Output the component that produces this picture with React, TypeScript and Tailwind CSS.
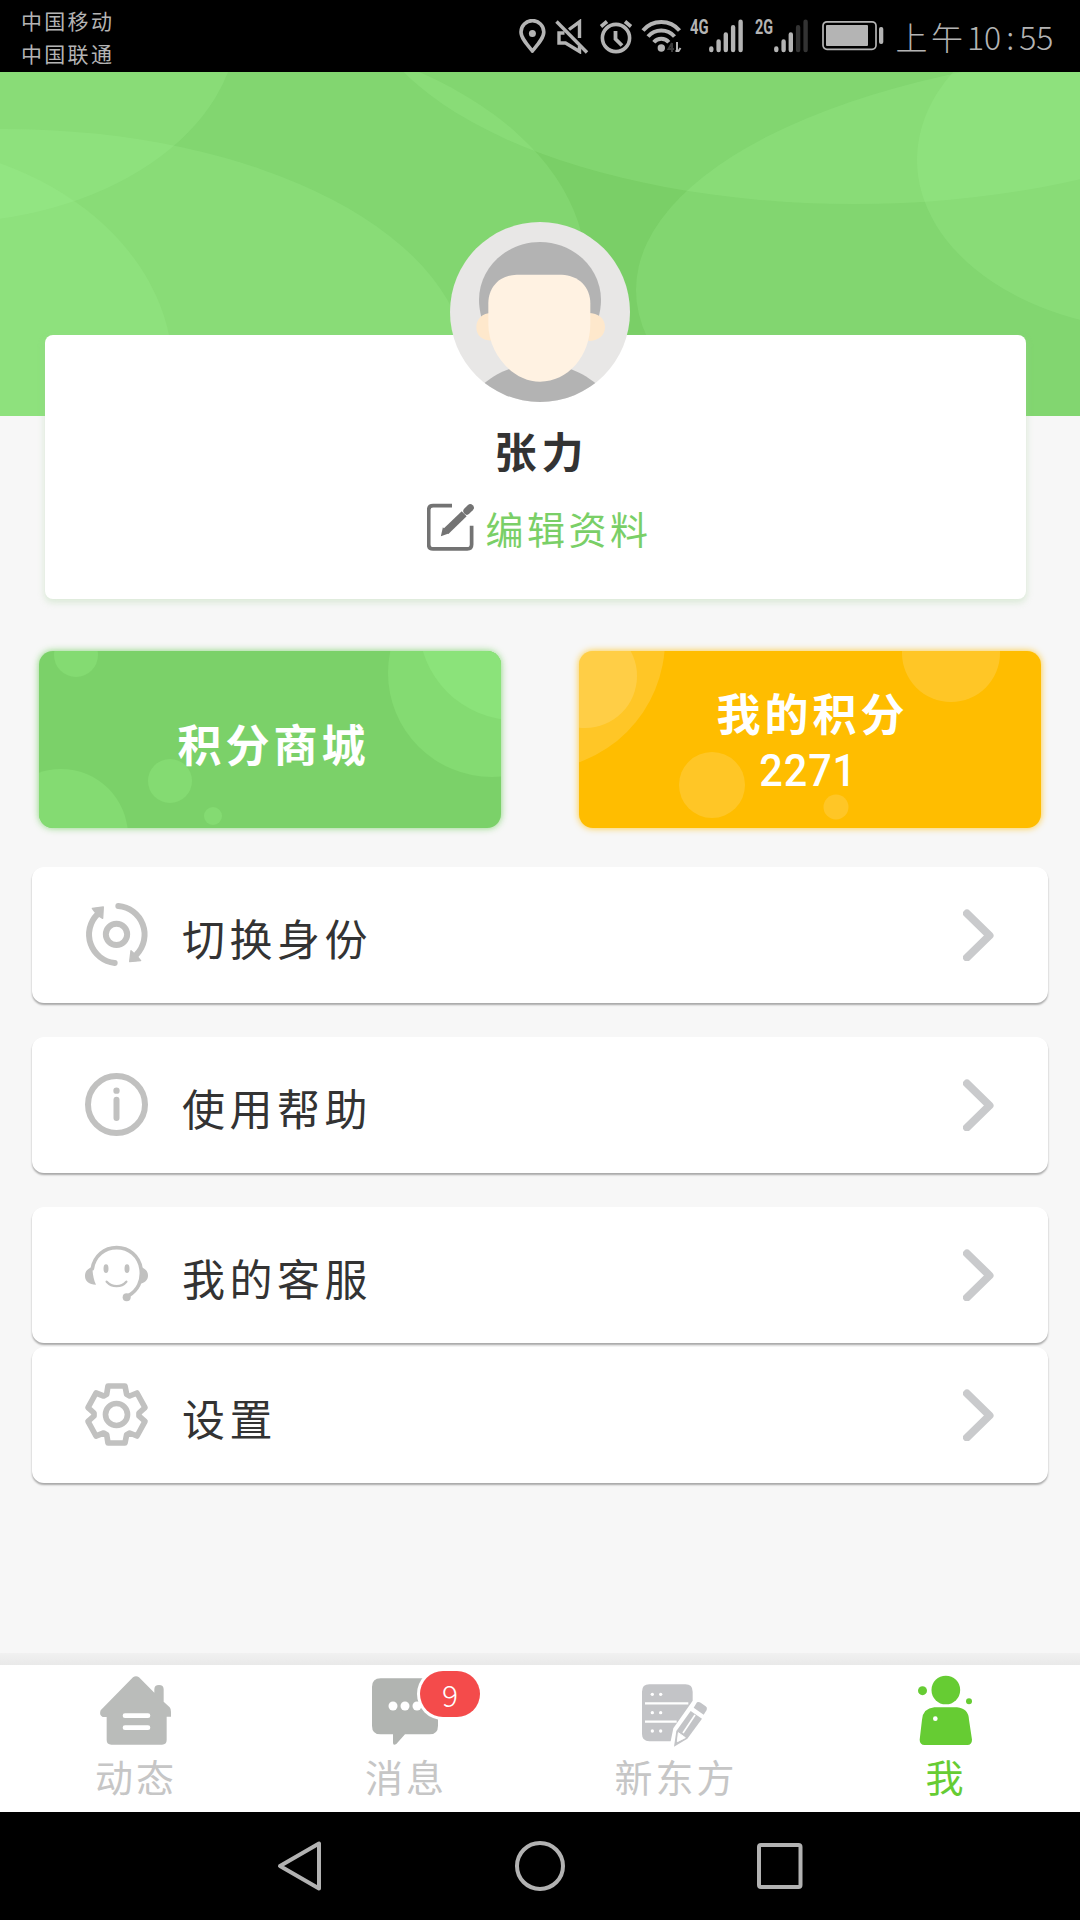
import React from "react";

const cjk = "font-['Noto_Sans_CJK_SC',sans-serif]";

function SignalBars({ weak }: { weak?: boolean }) {
  const dim = weak ? "#333333" : "#b4b4b4";
  return (
    <svg className="h-[34px] w-[35px]" viewBox="0 0 35 34" strokeWidth="4.4" strokeLinecap="round" stroke="#b4b4b4">
      <path d="M2.3 29.5v1.6M9.6 22.5v8.6M16.8 15.5v15.6" />
      <path d="M24.1 8.3v22.8M31.6 2.8v28.3" stroke={dim} />
    </svg>
  );
}

function StatusBar() {
  return (
    <div className="flex h-[72px] shrink-0 items-start bg-black text-[#b4b4b4]">
      <div className="ml-[21px] mt-[4px] w-[498px] text-[21px] leading-[33px] tracking-[2.300px]">
        <div>中国移动</div>
        <div>中国联通</div>
      </div>
      <div className="mt-[19px] flex h-[36px] items-start">
        <svg className="h-[35px] w-[27px]" viewBox="0 0 27 35" fill="none" stroke="#b4b4b4" strokeWidth="3.6">
          <path d="M13.4 32C8 25.5 2 19 2 13a11.4 11.4 0 0 1 22.8 0c0 6-6 12.500-11.400 19Z" strokeLinejoin="round" />
          <circle cx="13.400" cy="14.500" r="3.500" fill="#b4b4b4" stroke="none" />
        </svg>
        <svg className="ml-[9px] h-[35px] w-[34px]" viewBox="0 0 34 35" fill="none" stroke="#b4b4b4" strokeWidth="3.400">
          <path d="M1.500 2.500 32 33.500" />
          <path d="M9.500 14H4v10h6.500l14 8.500V27M14 10.500 24.500 2.800V19" />
        </svg>
        <svg className="ml-[10px] h-[35px] w-[34px]" viewBox="0 0 34 35" fill="none" stroke="#b4b4b4" strokeWidth="3.600">
          <circle cx="17" cy="19" r="13.600" />
          <path d="M16.500 12v8l6.500 6.500" strokeWidth="3.800" />
          <path d="M2 7.500 8 2.500M32 7.500l-6-5" />
        </svg>
        <svg className="ml-[8px] h-[35px] w-[42px]" viewBox="0 0 42 35" fill="none" stroke="#b4b4b4" strokeWidth="4">
          <path d="M2 11.500c9.500-11.300 27-11.300 36.500 0M7 17.500c7-8 19.500-8 26.500 0M12.800 23.300c4-4.600 11-4.600 15 0" />
          <circle cx="20.300" cy="29" r="3.700" fill="#b4b4b4" stroke="none" />
          <path d="M31 24v9M31 24l-3.500 6H33" stroke="#3a3a3a" strokeWidth="2" />
          <path d="M36 23v9M34.500 32h3l2-3" strokeWidth="2" />
        </svg>
        <span className="ml-[7px] mt-[-2px] w-[19px] origin-left scale-x-[0.74] whitespace-nowrap font-['Roboto'] text-[20px] font-bold leading-[20px]">4G</span>
        <SignalBars />
        <span className="ml-[11px] mt-[-2px] w-[19px] origin-left scale-x-[0.72] whitespace-nowrap font-['Roboto'] text-[20px] font-bold leading-[20px]">2G</span>
        <SignalBars weak />
        <svg className="ml-[13px] h-[34px] w-[62px]" viewBox="0 0 62 34">
          <rect x="1" y="2.800" width="53" height="27.500" rx="4" fill="none" stroke="#b4b4b4" strokeWidth="1.700" />
          <rect x="4" y="6" width="42" height="21" rx="1" fill="#b4b4b4" />
          <rect x="57" y="8" width="4.300" height="17" rx="2" fill="#b4b4b4" />
        </svg>
      </div>
      <div className="ml-[10px] mt-[16px] flex text-[32px] font-light leading-[40px]">
        <span className="w-[35px] text-center">上</span>
        <span className="w-[36px] text-center">午</span>
        <span className="ml-[2px]">10</span>
        <span className="w-[18px] text-center">:</span>
        <span>55</span>
      </div>
    </div>
  );
}

function Header() {
  return (
    <svg className="block h-[344px] w-full shrink-0" viewBox="0 72 1080 344" preserveAspectRatio="none">
      <rect y="72" width="1080" height="344" fill="#7acf67" />
      <g fill="#a5f596" fillOpacity="0.2">
        <ellipse cx="180" cy="270" rx="406" ry="245" />
        <ellipse cx="-60" cy="20" rx="298" ry="203" />
        <ellipse cx="5" cy="369" rx="462" ry="240" />
        <ellipse cx="-125" cy="372" rx="298" ry="230" />
        <ellipse cx="854" cy="-20" rx="494" ry="224" />
        <ellipse cx="1220" cy="290" rx="584" ry="243" />
        <ellipse cx="1170" cy="160" rx="253" ry="171" />
      </g>
    </svg>
  );
}

function Avatar() {
  return (
    <svg className="absolute left-[405px] top-[-113px] h-[180px] w-[180px]" viewBox="150 66 540 540">
      <defs>
        <clipPath id="face">
          <circle cx="420" cy="336" r="270" />
        </clipPath>
      </defs>
      <g clipPath="url(#face)">
        <rect x="150" y="66" width="540" height="540" fill="#e8e7e6" />
        <path d="M250 552c60-48 110-58 170-58s110 10 170 58v60H250Z" fill="#b3b3b3" />
        <path d="M244 352c-4-18-7-34-7-52 0-96 82-174 183-174s183 78 183 174c0 18-3 34-7 52Z" fill="#b3b3b3" />
        <path d="M275 339c-28 0-46 18-46 43s18 40 46 40ZM565 339c30 0 50 16 50 42s-20 42-50 42Z" fill="#fee8cc" />
        <path d="M265 310c0-50 35-85 85-86h135c50 2 86 36 86 86v60c0 100-68 175-151 175S265 460 265 372Z" fill="#fff2e2" />
      </g>
    </svg>
  );
}

function ProfileCard() {
  return (
    <div className="relative ml-[45px] mt-[-81px] flex h-[264px] w-[981px] shrink-0 flex-col items-center rounded-[8px] bg-white shadow-[0_3px_6px_1px_rgba(160,205,150,0.3)]">
      <Avatar />
      <div className="ml-[12px] mt-[85px] text-[42px] font-bold leading-[60px] tracking-[5px] text-[#333333]">张力</div>
      <div className="ml-[8px] mt-[21px] flex items-center">
        <svg className="h-[48px] w-[48px]" viewBox="84 909 142 142" fill="none" stroke="#737373" strokeWidth="11">
          <path d="M158 917H102q-13 0-13 13v102q0 13 13 13h101q13 0 13-13V976" />
          <path d="M140 993 194 941" strokeWidth="21" />
          <path d="M125 1007l6-26 17 18Z" fill="#737373" stroke="none" />
          <path d="M202 933l10-10" strokeWidth="21" strokeLinecap="round" />
        </svg>
        <span className="ml-[10px] mt-[3px] text-[38px] leading-[48px] tracking-[3.500px] text-[#7acf67]">编辑资料</span>
      </div>
    </div>
  );
}

function PointButtons() {
  return (
    <div className="mt-[52px] flex shrink-0 gap-[78px] pl-[39px]">
      <button className="relative h-[177px] w-[462px] rounded-[14px] bg-[#7bd169] shadow-[0_0_7px_rgba(123,209,105,0.9)]">
        <svg className="absolute inset-0 h-[177px] w-[462px] rounded-[14px]" viewBox="39 651 462 177" fill="#84db72">
          <circle cx="76" cy="655" r="22" />
          <circle cx="492" cy="673" r="104" />
          <circle cx="515" cy="624" r="96" fill="#8be37a" />
          <circle cx="61" cy="836" r="67" />
          <circle cx="170" cy="781" r="22" />
          <circle cx="213" cy="816" r="9" />
        </svg>
        <span className="relative ml-[7px] block pt-[6px] text-[44px] font-bold leading-[60px] tracking-[4px] text-white">积分商城</span>
      </button>
      <button className="relative flex h-[177px] w-[462px] flex-col items-center rounded-[14px] bg-[#ffbd00] pt-[28px] shadow-[0_0_7px_rgba(255,189,0,0.8)]">
        <svg className="absolute inset-0 h-[177px] w-[462px] rounded-[14px]" viewBox="579 651 462 177" fill="white" fillOpacity="0.15">
          <circle cx="585" cy="676" r="52" />
          <circle cx="535" cy="640" r="130" />
          <circle cx="951" cy="653" r="49" />
          <circle cx="712" cy="785" r="33" />
          <circle cx="836" cy="807" r="12.500" />
        </svg>
        <span className="relative ml-[5px] text-[44px] font-bold leading-[66px] tracking-[4px] text-white">我的积分</span>
        <span className="relative mr-[4px] scale-x-[0.92] font-['Roboto'] text-[45px] font-medium leading-[52px] tracking-[1px] text-white">2271</span>
      </button>
    </div>
  );
}

const SwitchIcon = (
  <svg className="h-[65px] w-[65px]" viewBox="192 156 195 195" fill="none" stroke="#c1c1c0" strokeWidth="18" strokeLinecap="round">
    <circle cx="289.500" cy="253" r="32" />
    <path d="M295 168a86 86 0 0 1 55 145M284 339a86 86 0 0 1-52-146" />
    <path d="M217 175l33-4-2 34-12-7-12-13ZM333 302l-4 33 33-3-8-10-13-12Z" fill="#c1c1c0" stroke="#c1c1c0" strokeWidth="4" strokeLinejoin="round" />
  </svg>
);

const InfoIcon = (
  <svg className="h-[65px] w-[65px]" viewBox="192 666 195 195" fill="none" stroke="#c1c1c0" strokeWidth="18" strokeLinecap="round">
    <circle cx="289.500" cy="763.500" r="85.500" />
    <path d="M289.500 749v55" />
    <circle cx="289.500" cy="722" r="9.500" fill="#c1c1c0" stroke="none" />
  </svg>
);

const ServiceIcon = (
  <svg className="h-[65px] w-[65px]" viewBox="192 156 195 195" fill="none" stroke="#c1c1c0" strokeWidth="11" strokeLinecap="round">
    <path d="M217 236c6-38 36-63 73-63s67 25 73 63c6 38-12 66-36 80" />
    <path d="M260 275c16 18 44 18 59 0" strokeWidth="7" />
    <path d="M217 230c-17 7-22 16-22 28 0 16 12 26 33 26-8-17-10-33-11-54ZM362 230c17 7 22 16 22 27 0 13-10 22-28 26 7-17 8-34 6-53Z" fill="#c1c1c0" stroke="none" />
    <ellipse cx="258" cy="236" rx="7.500" ry="13" fill="#c1c1c0" stroke="none" />
    <ellipse cx="321" cy="236" rx="7.500" ry="13" fill="#c1c1c0" stroke="none" />
    <circle cx="320" cy="322" r="12" fill="#c1c1c0" stroke="none" />
  </svg>
);

const SettingsIcon = (
  <svg className="h-[65px] w-[65px]" viewBox="192 576 195 195" fill="none" stroke="#c1c1c0" strokeWidth="17" strokeLinejoin="round">
    <circle cx="289.500" cy="673.500" r="33" />
    <path d="M264 588h51l5 25 9 5 22-9 24 44-18 16v9l18 16-24 44-22-9-9 5-5 25h-51l-4-25-9-5-23 9-24-44 18-16v-9l-18-16 24-44 23 9 9-5Z" />
  </svg>
);

function MenuCard({ icon, label, className }: { icon: React.ReactNode; label: string; className: string }) {
  return (
    <div className={`mx-[32px] flex h-[136px] shrink-0 items-start rounded-[12px] bg-white pl-[52px] pt-[35px] shadow-[0_2px_2px_rgba(0,0,0,0.32)] ${className}`}>
      {icon}
      <span className="ml-[33px] mt-[5px] flex-1 text-[43px] leading-[60px] tracking-[4.500px] text-[#333333]">{label}</span>
      <svg className="mr-[54px] mt-[5px] h-[54px] w-[31px]" viewBox="0 0 31 54" fill="none" stroke="#c9cacc" strokeWidth="8" strokeLinecap="round" strokeLinejoin="round">
        <path d="M4 6.500 26.500 28.500 4 50.500" />
      </svg>
    </div>
  );
}

function Tab({ label, viewBox, active, badge, children }: { label: string; viewBox: string; active?: boolean; badge?: string; children: React.ReactNode }) {
  return (
    <div className="relative flex w-[270px] flex-col items-center pt-[5px]">
      <svg className="h-[80px] w-[90px]" viewBox={viewBox}>{children}</svg>
      {badge && (
        <span className="absolute left-[150px] top-[6px] flex h-[46px] w-[60px] items-center justify-center rounded-[23px] bg-[#f44b4b] text-[30px] font-light text-white shadow-[0_0_0_3px_white]">{badge}</span>
      )}
      <span className={`ml-[2px] mt-[2px] text-[38px] leading-[48px] tracking-[3px] ${active ? "text-[#66cc33]" : "text-[#c6c6c6]"}`}>{label}</span>
    </div>
  );
}

function TabBar() {
  return (
    <div className="shrink-0">
      <div className="h-[12px] bg-gradient-to-b from-[#f1f1f1] to-[#e9e9e9]" />
      <div className="flex h-[147px] bg-white">
        <Tab label="动态" viewBox="90 89 270 240">
          <path d="M219 111q9-7 18 0l46 46v-10q0-13 14-13t14 13v37l18 17q5 6 4 14v14h-13v70q0 14-14 14H154q-14 0-14-14v-69h-12q-12-6-6-20Z" fill="#babcba" />
          <path d="M195 226h69M195 262h69" stroke="white" strokeWidth="14" strokeLinecap="round" />
        </Tab>
        <Tab label="消息" viewBox="900 89 270 240" badge="9">
          <path d="M962 114h146q26 0 26 26v116q0 26-26 26h-73l-26 29q-10 6-10-4v-25h-37q-26 0-26-26V140q0-26 26-26Z" fill="#b1b4b1" />
          <g fill="white">
            <circle cx="999" cy="197" r="13.500" />
            <circle cx="1035" cy="197" r="13.500" />
            <circle cx="1071" cy="197" r="13.500" />
          </g>
        </Tab>
        <Tab label="新东方" viewBox="150 89 270 240">
          <path d="M208 132h108q22 0 22 22v27l-58 83-8 39h-64q-22 0-22-22V154q0-22 22-22Z" fill="#c3c4c7" />
          <path d="M195 189h130M195 244h95" stroke="white" strokeWidth="7" />
          <g fill="white">
            <circle cx="217" cy="162" r="5" /><circle cx="242" cy="162" r="5" />
            <circle cx="217" cy="217" r="5" /><circle cx="242" cy="217" r="5" />
            <circle cx="217" cy="272" r="5" /><circle cx="242" cy="272" r="5" />
          </g>
          <g fill="#c3c4c7">
            <path d="M351 186q5-3 11 1l15 11q6 4 3 11l-9 14-30-21Z" />
            <path d="M332 212l34 23-44 60-40 24 7-47Z" />
          </g>
          <path d="M295 277l-3 27 24-12Z" fill="white" stroke="white" strokeWidth="3" />
          <path d="M345 224l-36 54" stroke="white" strokeWidth="5" />
        </Tab>
        <Tab label="我" viewBox="960 89 270 240" active>
          <g fill="#66cc33">
            <circle cx="1097.500" cy="149" r="43" />
            <circle cx="1027.500" cy="151" r="13.500" />
            <circle cx="1167" cy="183" r="9" />
            <path d="M1063 201h68q34 3 36 37l9 60q0 15-14 16h-128q-15-1-15-16l7-60q3-34 37-37Z" />
          </g>
          <circle cx="1066" cy="235" r="7" fill="white" />
        </Tab>
      </div>
    </div>
  );
}

function NavBar() {
  return (
    <div className="flex h-[108px] shrink-0 items-center justify-between bg-black pl-[275px] pr-[275px]">
      <svg className="h-[54px] w-[50px]" viewBox="0 0 50 54" fill="none" stroke="#b2b2b2" strokeWidth="4" strokeLinejoin="round">
        <path d="M44 4.500v45L5 27Z" />
      </svg>
      <svg className="h-[54px] w-[54px]" viewBox="0 0 54 54" fill="none" stroke="#b2b2b2" strokeWidth="4">
        <circle cx="27" cy="27" r="23" />
      </svg>
      <svg className="h-[54px] w-[50px]" viewBox="0 0 50 54" fill="none" stroke="#b2b2b2" strokeWidth="4">
        <rect x="4" y="6" width="41.500" height="42" rx="2" />
      </svg>
    </div>
  );
}

export default function App() {
  return (
    <div className={`flex h-[1920px] w-[1080px] flex-col overflow-hidden bg-[#f7f7f7] ${cjk}`}>
      <StatusBar />
      <Header />
      <ProfileCard />
      <PointButtons />
      <MenuCard icon={SwitchIcon} label="切换身份" className="mt-[39px]" />
      <MenuCard icon={InfoIcon} label="使用帮助" className="mt-[34px]" />
      <MenuCard icon={ServiceIcon} label="我的客服" className="mt-[34px]" />
      <MenuCard icon={SettingsIcon} label="设置" className="mt-[4px]" />
      <div className="flex-1" />
      <TabBar />
      <NavBar />
    </div>
  );
}
